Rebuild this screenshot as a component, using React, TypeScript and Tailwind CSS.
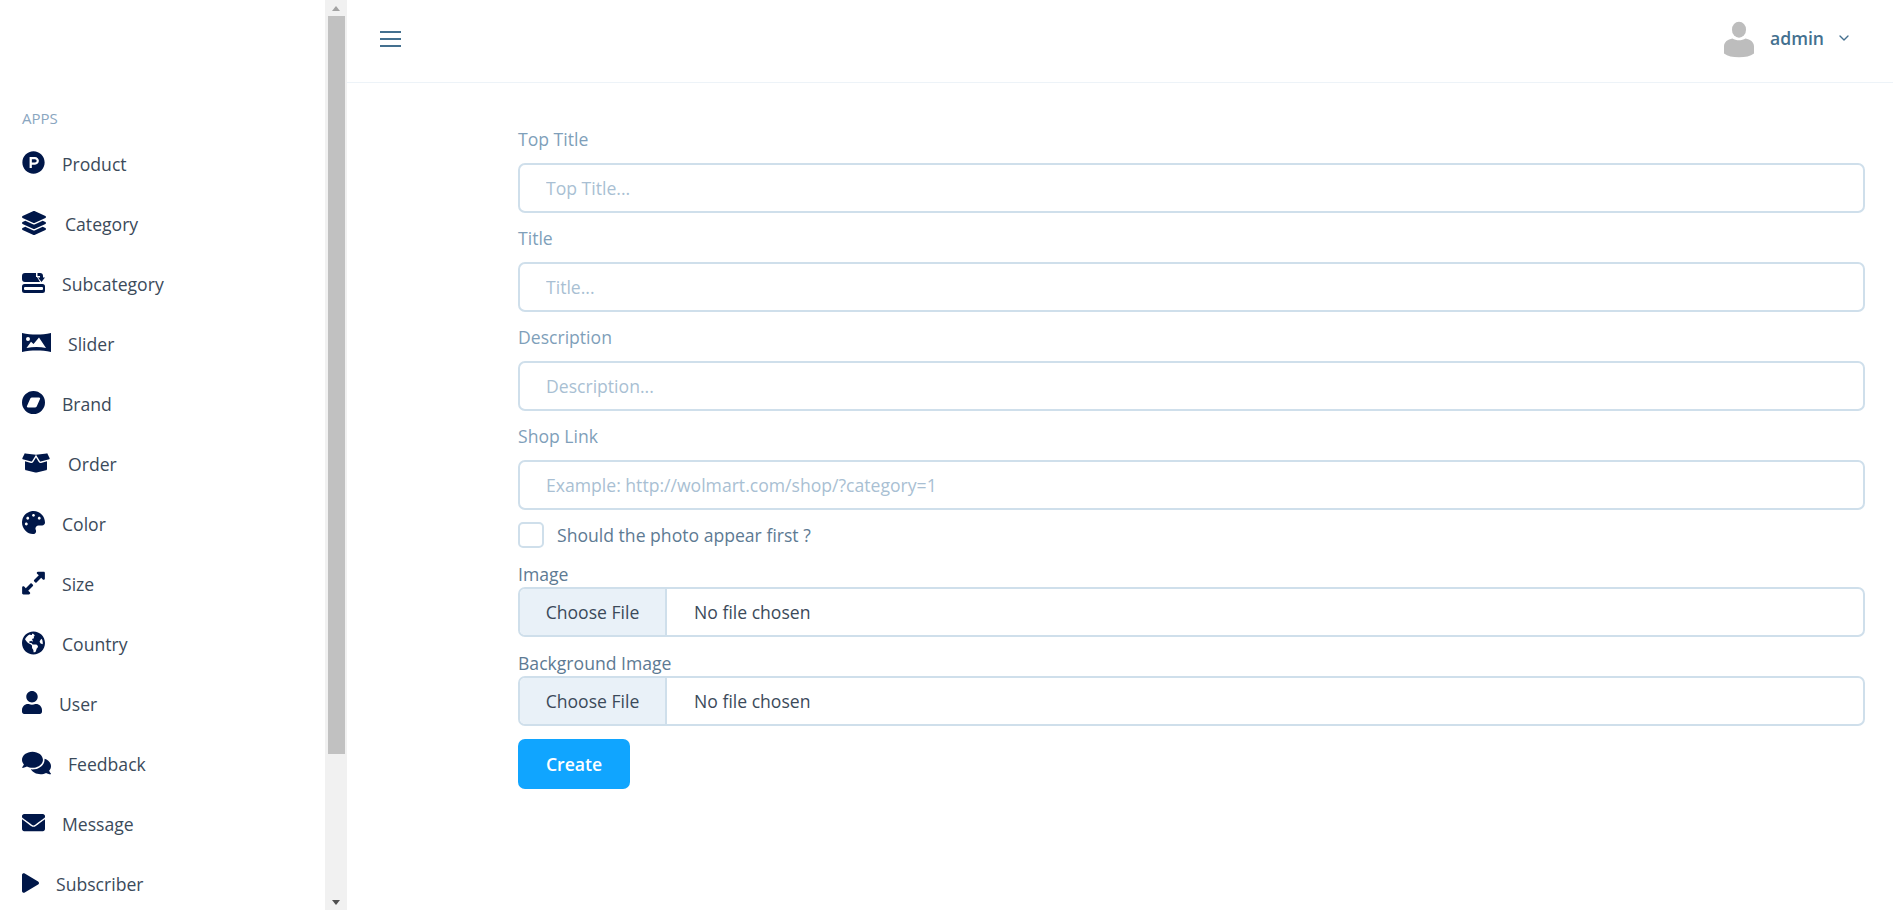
import type { ReactNode } from "react";
import {
  FaBoxOpen,
  FaComments,
  FaEnvelope,
  FaExpandAlt,
  FaGlobeAmericas,
  FaLayerGroup,
  FaPalette,
  FaPlay,
  FaProductHunt,
  FaUser,
} from "react-icons/fa";
import { FiChevronDown } from "react-icons/fi";

const SubcategoryIcon = () => (
  <svg viewBox="0 0 23 20" className="w-[23px] h-5" fill="currentColor">
    <path d="M3 0h11v4h1l3 5H3a3 3 0 0 1-3-3V3a3 3 0 0 1 3-3z" />
    <path d="M15.500 0H18a3 3 0 0 1 3 3v1.500h2L19.500 9 16 4.500h2V3h-2.500z" />
    <path
      fillRule="evenodd"
      d="M2.500 11h18a2.500 2.500 0 0 1 2.500 2.500v4a2.500 2.500 0 0 1-2.500 2.500h-18A2.500 2.500 0 0 1 0 17.500v-4A2.500 2.500 0 0 1 2.500 11zm.5 3a1 1 0 0 0-1 1v1a1 1 0 0 0 1 1h17a1 1 0 0 0 1-1v-1a1 1 0 0 0-1-1z"
    />
  </svg>
);

const SliderIcon = () => (
  <svg viewBox="0 0 29 21" className="w-[29px] h-[21px]" fill="currentColor">
    <path
      fillRule="evenodd"
      d="M0 1c5 1.200 9.500 1.600 14.500 1.600S24 2.200 29 1v19c-5-1.200-9.500-1.600-14.500-1.600S5 18.800 0 20zM6 5a2 2 0 1 0 0 4 2 2 0 0 0 0-4zm11 .5l-5.500 6.500-2.500-2.200L4.500 16c3.300-.7 6.500-1 10-1s6.700.3 9.500.9z"
    />
  </svg>
);

const BrandIcon = () => (
  <svg viewBox="0 0 23 23" className="w-[23px] h-[23px]" fill="currentColor">
    <path
      fillRule="evenodd"
      d="M11.500 0a11.500 11.500 0 1 1 0 23 11.500 11.500 0 0 1 0-23zM10 6.500a2 2 0 0 0-1.700 1L5 15a1 1 0 0 0 .9 1.500H13a2 2 0 0 0 1.700-1L18 8a1 1 0 0 0-.9-1.500z"
    />
  </svg>
);

const AvatarIcon = () => (
  <svg viewBox="0 0 32 38" className="w-[30px] h-[37px]" fill="#bdbdbd">
    <ellipse cx="16" cy="8.500" rx="7.500" ry="8.500" />
    <path d="M9 18c4 2.500 10 2.500 14 0 5 1 9 3.500 9 8.500v7.500c-4 3-9 4-16 4S4 37 0 34v-7.500C0 21.500 4 19 9 18z" />
  </svg>
);

const navItems: { label: string; icon: ReactNode; gap: string }[] = [
  { label: "Product", icon: <FaProductHunt className="w-[23px] h-[23px]" />, gap: "gap-[17px]" },
  { label: "Category", icon: <FaLayerGroup className="w-6 h-6" />, gap: "gap-[19px]" },
  { label: "Subcategory", icon: <SubcategoryIcon />, gap: "gap-[17px]" },
  { label: "Slider", icon: <SliderIcon />, gap: "gap-[17px]" },
  { label: "Brand", icon: <BrandIcon />, gap: "gap-[17px]" },
  { label: "Order", icon: <FaBoxOpen className="w-7 h-[22px]" />, gap: "gap-[18px]" },
  { label: "Color", icon: <FaPalette className="w-[23px] h-[23px]" />, gap: "gap-[17px]" },
  { label: "Size", icon: <FaExpandAlt className="w-[23px] h-[26px]" />, gap: "gap-[17px]" },
  { label: "Country", icon: <FaGlobeAmericas className="w-[23px] h-6" />, gap: "gap-[17px]" },
  { label: "User", icon: <FaUser className="w-5 h-[23px]" />, gap: "gap-[17px]" },
  { label: "Feedback", icon: <FaComments className="w-[29px] h-[26px]" />, gap: "gap-[17px]" },
  { label: "Message", icon: <FaEnvelope className="w-[23px] h-[23px]" />, gap: "gap-[17px]" },
  { label: "Subscriber", icon: <FaPlay className="w-[17px] h-5" />, gap: "gap-[17px]" },
];

const textFields = [
  { label: "Top Title", placeholder: "Top Title..." },
  { label: "Title", placeholder: "Title..." },
  { label: "Description", placeholder: "Description..." },
  { label: "Shop Link", placeholder: "Example: http://wolmart.com/shop/?category=1" },
];

function Sidebar() {
  return (
    <aside className="w-[347px] h-full shrink-0 flex overflow-hidden bg-white">
      <div className="w-[325px] shrink-0 pt-[109px] pl-[22px] overflow-hidden">
        <p className="text-[15px] leading-[18px] text-[#8aa6bf] mb-[7px]">APPS</p>
        {navItems.map((item) => (
          <a key={item.label} className={`h-[60px] flex items-center ${item.gap} text-[17.6px] text-[#3b4a5a]`}>
            <span className="text-[#001749] -mt-[3px]">{item.icon}</span>
            {item.label}
          </a>
        ))}
      </div>
      <div className="w-[22px] shrink-0 bg-[#f1f1f1] flex flex-col items-center">
        <div className="h-4 flex items-center justify-center">
          <div className="w-0 h-0 border-x-[4px] border-x-transparent border-b-[5px] border-b-[#a3a3a3]" />
        </div>
        <div className="w-[17px] h-[738px] bg-[#c1c1c1]" />
        <div className="mt-auto h-4 flex items-center justify-center">
          <div className="w-0 h-0 border-x-[4px] border-x-transparent border-t-[5px] border-t-[#505050]" />
        </div>
      </div>
    </aside>
  );
}

function Header() {
  return (
    <header className="h-[83px] pb-1 flex items-center justify-between border-b border-[#edf3f8] pl-[33px] pr-[41px]">
      <button className="w-[21px] flex flex-col gap-[5px]">
        <span className="h-[2px] bg-[#44708f]" />
        <span className="h-[2px] bg-[#44708f]" />
        <span className="h-[2px] bg-[#44708f]" />
      </button>
      <div className="flex items-center">
        <AvatarIcon />
        <span className="ml-4 -mt-[2px] text-[17.6px] font-semibold text-[#44708f]">admin</span>
        <FiChevronDown className="ml-3 -mt-[2px] text-[#44708f]" size={16} />
      </div>
    </header>
  );
}

function FileField({ label }: { label: string }) {
  return (
    <div>
      <label className="block h-6 leading-[22px] text-[17.6px] text-[#5d7a93]">{label}</label>
      <div className="h-[50px] flex items-stretch border-2 border-[#cfdfeb] rounded-[7px] overflow-hidden text-[17.6px] text-[#3b4a5a]">
        <span className="w-[147px] flex items-center justify-center bg-[#e9f1f8] border-r-2 border-[#cfdfeb]">
          Choose File
        </span>
        <span className="flex items-center pl-[27px]">No file chosen</span>
      </div>
    </div>
  );
}

function ProductForm() {
  return (
    <form className="pt-[44px] pl-[171px] pr-7">
      {textFields.map((field) => (
        <div key={field.label} className="mb-[13px]">
          <label className="block h-6 leading-6 mb-3 text-[17.6px] text-[#7f9fba]">{field.label}</label>
          <input
            placeholder={field.placeholder}
            className="w-full h-[50px] px-[26px] border-2 border-[#cfdfeb] rounded-[7px] text-[17.6px] outline-none placeholder:text-[#a9bfd3]"
          />
        </div>
      ))}
      <div className="-mt-[1px] mb-[15px] h-[26px] flex items-center gap-[13px]">
        <span className="w-[26px] h-[26px] border-2 border-[#cfdfeb] rounded-[5px]" />
        <span className="text-[17.6px] text-[#5d7a93]">Should the photo appear first ?</span>
      </div>
      <div className="flex flex-col gap-[15px]">
        <FileField label="Image" />
        <FileField label="Background Image" />
      </div>
      <button
        type="button"
        className="mt-[13px] w-[112px] h-[50px] rounded-[7px] bg-[#10a5ff] text-white text-[17.6px] font-semibold"
      >
        Create
      </button>
    </form>
  );
}

export default function App() {
  return (
    <div className="w-[1893px] h-[910px] flex overflow-hidden bg-white font-['Open_Sans',sans-serif]">
      <Sidebar />
      <main className="flex-1 min-w-0">
        <Header />
        <ProductForm />
      </main>
    </div>
  );
}
